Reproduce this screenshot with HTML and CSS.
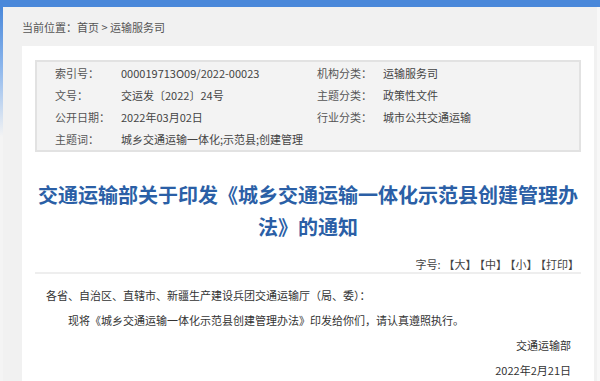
FILE: index.html
```html
<!DOCTYPE html>
<html lang="zh-CN">
<head>
    <meta charset="UTF-8">
    <meta name="viewport" content="width=device-width, initial-scale=1.0">
    <title>交通运输部关于印发《城乡交通运输一体化示范县创建管理办法》的通知</title>
    <link rel="stylesheet" href="styles.css">
</head>
<body>
    <div class="topbar"></div>
    <div class="frame">
        <div class="edge-left"></div>
        <div class="main">
            <div class="crumb">当前位置：首页 &gt; 运输服务司</div>
            <div class="panel">
                <div class="info">
                    <span class="label">索引号：</span>
                    <span class="value">000019713O09/2022-00023</span>
                    <span class="label">机构分类：</span>
                    <span class="value">运输服务司</span>

                    <span class="label">文号：</span>
                    <span class="value">交运发〔2022〕24号</span>
                    <span class="label">主题分类：</span>
                    <span class="value">政策性文件</span>

                    <span class="label">公开日期：</span>
                    <span class="value">2022年03月02日</span>
                    <span class="label">行业分类：</span>
                    <span class="value">城市公共交通运输</span>

                    <span class="label">主题词：</span>
                    <span class="value wide">城乡交通运输一体化;示范县;创建管理</span>
                </div>

                <h1 class="title">交通运输部关于印发《城乡交通运输一体化示范县创建管理办法》的通知</h1>

                <div class="tools">
                    字号:<span>【大】</span><span>【中】</span><span>【小】</span><span>【打印】</span>
                </div>

                <div class="content">
                    <p>各省、自治区、直辖市、新疆生产建设兵团交通运输厅（局、委）：</p>
                    <p class="indent">现将《城乡交通运输一体化示范县创建管理办法》印发给你们，请认真遵照执行。</p>
                    <p class="right">交通运输部</p>
                    <p class="right">2022年2月21日</p>
                </div>
            </div>
        </div>
        <div class="edge-right"></div>
    </div>
</body>
</html>
```

FILE: styles.css
```css
body {
    margin: 0;
    font-family: "Noto Sans CJK SC", "Noto Sans", sans-serif;
    font-size: 11px;
    color: #444;
    background-color: #f1f1f1;
    height: 381px;
    overflow: hidden;
}
.topbar {
    height: 7px;
    background-color: #4a88da;
}
.frame {
    display: flex;
    height: 374px;
}
.edge-left {
    width: 3px;
    background: linear-gradient(#4a88da, #8cb6ec 60px, #f4f4f4 130px);
}
.edge-right {
    width: 3px;
    background-color: #f8f8f8;
}
.main {
    flex: 1;
    display: flex;
    flex-direction: column;
    padding: 0 3px 0 19px;
}
.crumb {
    height: 39px;
    line-height: 40px;
    color: #555;
}
.panel {
    flex: 1;
    background: white;
    padding: 14px 13px 0;
    overflow: hidden;
}
.info {
    display: grid;
    grid-template-columns: 66px 196px 66px 1fr;
    grid-auto-rows: 22px;
    align-items: center;
    padding-left: 18px;
    border: 2px solid #e2e2e2;
    background-color: #f3f3f3;
}
.label {
    color: #555;
}
.value {
    color: #444;
}
.wide {
    grid-column: span 3;
}
.title {
    margin: 27px 0 0;
    font-size: 20px;
    line-height: 32px;
    text-align: center;
    color: #2b5fa6;
    font-weight: bold;
}
.tools {
    margin-top: 13px;
    line-height: 16px;
    text-align: right;
    padding-right: 2px;
    color: #444;
    border-bottom: 2px solid #eeeeee;
}
.tools span {
    margin-left: 3px;
}
.content {
    padding: 9px 10px 0 11px;
    color: #333;
}
.content p {
    margin: 0;
    line-height: 25px;
}
.indent {
    text-indent: 2em;
}
.right {
    text-align: right;
}
```
